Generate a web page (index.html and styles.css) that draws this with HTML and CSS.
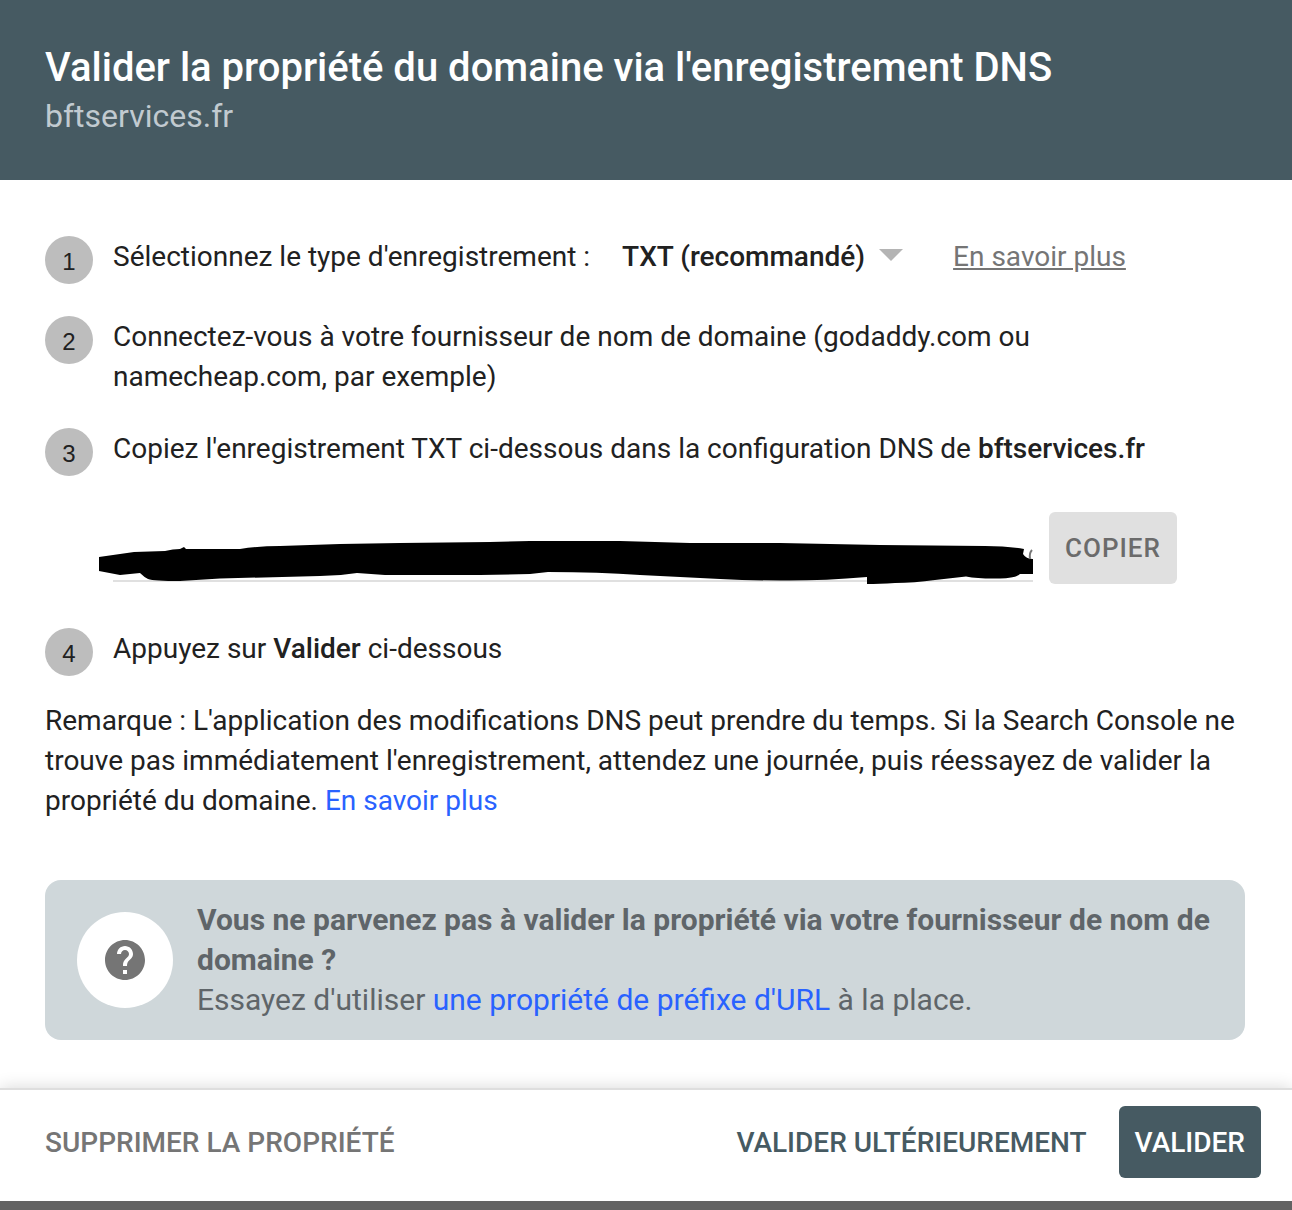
FILE: index.html
```html
<!DOCTYPE html>
<html lang="fr">
<head>
    <meta charset="UTF-8">
    <meta name="viewport" content="width=device-width, initial-scale=1.0">
    <title>Valider la propriété du domaine</title>
    <link rel="stylesheet" href="styles.css">
</head>
<body>
    <div class="dialog">
        <header class="dialog-header">
            <h1>Valider la propriété du domaine via l'enregistrement DNS</h1>
            <p class="domain">bftservices.fr</p>
        </header>

        <main class="dialog-body">
            <div class="step">
                <span class="step-number">1</span>
                <div class="step-text record-type">
                    <label for="record-type">Sélectionnez le type d'enregistrement :</label>
                    <div class="select-box">
                        <select id="record-type">
                            <option>TXT (recommandé)</option>
                        </select>
                        <svg class="arrow" viewBox="0 0 24 12"><path d="M0 0h24L12 12z"/></svg>
                    </div>
                    <a href="#" class="help-link">En savoir plus</a>
                </div>
            </div>
            <div class="step">
                <span class="step-number">2</span>
                <p class="step-text step-long">Connectez-vous à votre fournisseur de nom de domaine (godaddy.com ou namecheap.com, par exemple)</p>
            </div>
            <div class="step">
                <span class="step-number">3</span>
                <p class="step-text">Copiez l'enregistrement TXT ci-dessous dans la configuration DNS de <b>bftservices.fr</b></p>
            </div>

            <div class="copy-row">
                <div class="record-field">
                    <input type="text" aria-label="Enregistrement TXT" readonly>
                    <!-- Hides the verification token -->
                    <svg class="mask" viewBox="0 0 934 44" preserveAspectRatio="none">
                        <path d="M0 17L35 12 66 11Q74 9 81 9L85 7 87 9 141 9Q160 6 181 6L241 4 301 3 391 2 431 1H521L591 3H681L781 5 886 6Q908 6 925 9L924 14Q927 19 934 19V34H921Q917 38 901 38.500Q880 39 867 36.500L836 40Q815 43 796 43Q780 44 768 44V37Q721 41 681 40.500 651 40.500 621 39L541 35Q500 32 449 32L431 34 381 35H286L258 33Q240 36 221 36L121 38.500 81 41Q55 41 49 39 45 37 41 33L21 35 0 31Z"/>
                        <path class="token-end" d="M933 10q-3 3-2 9"/>
                    </svg>
                </div>
                <button type="button" class="btn btn-copy">COPIER</button>
            </div>

            <div class="step">
                <span class="step-number">4</span>
                <p class="step-text">Appuyez sur <b>Valider</b> ci-dessous</p>
            </div>

            <p class="note">Remarque : L'application des modifications DNS peut prendre du temps. Si la Search Console ne trouve pas immédiatement l'enregistrement, attendez une journée, puis réessayez de valider la propriété du domaine. <a href="#">En savoir plus</a></p>

            <section class="tip">
                <div class="tip-icon">
                    <svg viewBox="0 0 24 24"><path d="M12 2C6.480 2 2 6.480 2 12s4.480 10 10 10 10-4.480 10-10S17.520 2 12 2zm1 17h-2v-2h2v2zm2.070-7.750l-.9.920C13.450 12.900 13 13.500 13 15h-2v-.5c0-1.100.450-2.100 1.170-2.830l1.240-1.260c.370-.360.590-.860.590-1.410 0-1.100-.9-2-2-2s-2 .9-2 2H8c0-2.210 1.790-4 4-4s4 1.790 4 4c0 .880-.360 1.680-.930 2.250z"/></svg>
                </div>
                <div class="tip-text">
                    <h2>Vous ne parvenez pas à valider la propriété via votre fournisseur de nom de domaine ?</h2>
                    <p>Essayez d'utiliser <a href="#">une propriété de préfixe d'URL</a> à la place.</p>
                </div>
            </section>
        </main>

        <footer class="dialog-footer">
            <button type="button" class="btn btn-remove">SUPPRIMER LA PROPRIÉTÉ</button>
            <div class="actions">
                <button type="button" class="btn btn-later">VALIDER ULTÉRIEUREMENT</button>
                <button type="button" class="btn btn-verify">VALIDER</button>
            </div>
        </footer>
    </div>
</body>
</html>
```

FILE: styles.css
```css
/* Basic styling */
* {
    box-sizing: border-box;
}
body {
    margin: 0;
    background-color: #636363;
    font-family: Roboto, Arial, sans-serif;
    font-size: 28px;
    line-height: 40px;
    color: #212121;
}
h1, h2, p {
    margin: 0;
}
b {
    font-weight: 500;
}
a {
    color: #2962ff;
    text-decoration: none;
}
.dialog {
    background-color: #fff;
    box-shadow: 0 2px 8px rgba(0, 0, 0, 0.2);
}

/* Header */
.dialog-header {
    padding: 44px 45px 40px;
    background-color: #465a62;
    line-height: 48px;
}
.dialog-header h1 {
    font-size: 40px;
    font-weight: 500;
    color: #fff;
}
.domain {
    font-size: 32px;
    color: #c1cad0;
}

/* Steps */
.dialog-body {
    padding: 56px 47px 48px 45px;
}
.step {
    display: flex;
    align-items: flex-start;
    gap: 20px;
    margin-bottom: 32px;
}
.step-number {
    flex: none;
    width: 48px;
    height: 48px;
    border-radius: 50%;
    background-color: #bdbdbd;
    font-family: "Liberation Sans", Arial, sans-serif;
    font-size: 24px;
    line-height: 52px;
    text-align: center;
}
.step-text {
    margin: 1px 0 -1px;
}
.step-long {
    max-width: 1000px;
}
.record-type {
    display: flex;
    flex-wrap: wrap;
}
.select-box {
    position: relative;
    margin: 0 50px 0 32px;
}
.select-box select {
    appearance: none;
    display: block;
    height: 40px;
    padding: 0 37px 2px 0;
    border: none;
    background: none;
    font: inherit;
    font-weight: 500;
    color: inherit;
}
.arrow {
    position: absolute;
    top: 12px;
    right: 0;
    width: 24px;
    height: 12px;
    fill: #b4b4b4;
    pointer-events: none;
}
.help-link {
    color: #757575;
    text-decoration: underline;
}

/* TXT record */
.copy-row {
    display: flex;
    gap: 16px;
    margin: 36px 0 44px;
    padding-left: 68px;
}
.record-field {
    position: relative;
    flex: 0 1 920px;
    height: 70px;
    border-bottom: 2px solid #e0e0e0;
}
.record-field input {
    width: 100%;
    height: 68px;
    padding: 28px 0 0;
    border: none;
    outline: none;
    font: inherit;
}
.mask {
    position: absolute;
    top: 28px;
    left: -14px;
    width: calc(100% + 14px);
    height: 44px;
}
.token-end {
    fill: none;
    stroke: #757575;
    stroke-width: 2;
}

/* Buttons */
.btn {
    height: 72px;
    padding: 2px 16px 0;
    border: none;
    border-radius: 6px;
    background: none;
    font: inherit;
    font-weight: 500;
    cursor: pointer;
}
.btn-copy {
    padding-top: 0;
    background-color: #e0e0e0;
    color: #6b6b6b;
    font-size: 26px;
    letter-spacing: 1px;
}
.btn-remove {
    padding-left: 0;
    color: #757575;
}
.btn-later {
    color: #465a62;
}
.btn-verify {
    background-color: #465a62;
    color: #fff;
}

.note {
    margin-top: -7px;
}

/* Help box */
.tip {
    display: flex;
    align-items: center;
    gap: 24px;
    margin-top: 59px;
    padding: 20px 32px;
    border-radius: 16px;
    background-color: #cfd7da;
    font-size: 30px;
    color: #5f6569;
}
.tip h2 {
    font-size: 30px;
    font-weight: 700;
}
.tip-icon {
    flex: none;
    display: flex;
    align-items: center;
    justify-content: center;
    width: 96px;
    height: 96px;
    border-radius: 50%;
    background-color: #fff;
}
.tip-icon svg {
    width: 48px;
    height: 48px;
    fill: #757575;
}

/* Footer */
.dialog-footer {
    display: flex;
    justify-content: space-between;
    padding: 16px 31px 23px 45px;
    border-top: 2px solid #dedede;
    box-shadow: 0 0 16px rgba(0, 0, 0, 0.16);
}
.actions {
    display: flex;
    gap: 16px;
}
```
